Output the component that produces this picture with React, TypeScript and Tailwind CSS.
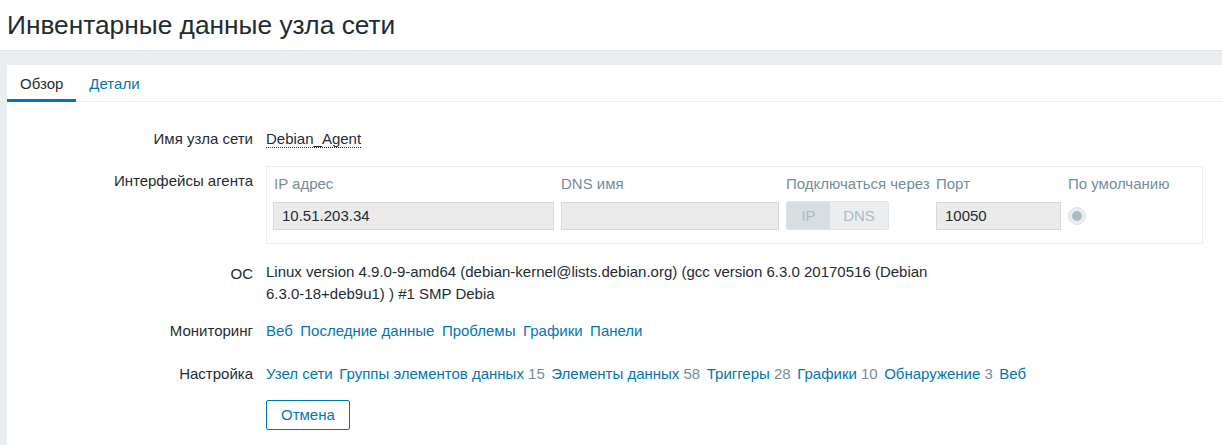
import React from 'react';

const font = { fontFamily: '"Liberation Sans", Arial, sans-serif' };

function Row({ label, children, labelClass = '' }: { label: string; children: React.ReactNode; labelClass?: string }) {
  return (
    <div className="flex">
      <div className={`w-[246px] shrink-0 text-right text-[#1f2c33] ${labelClass}`}>{label}</div>
      <div className="ml-[13px] flex-1">{children}</div>
    </div>
  );
}

function Count({ n }: { n: number }) {
  return <span className="text-[#768d99]"> {n}</span>;
}

export default function App() {
  const monitoring = ['Веб', 'Последние данные', 'Проблемы', 'Графики', 'Панели'];
  const config: [string, number | null][] = [
    ['Узел сети', null],
    ['Группы элементов данных', 15],
    ['Элементы данных', 58],
    ['Триггеры', 28],
    ['Графики', 10],
    ['Обнаружение', 3],
    ['Веб', null],
  ];

  return (
    <div className="w-[1222px] h-[445px] overflow-hidden bg-[#ebeef0] text-[15px] leading-[18px]" style={font}>
      {/* header */}
      <div className="h-[51px] bg-white flex items-center pl-[7px] border-b border-[#e2e6e9]">
        <h1 className="text-[26.3px] leading-[30px] text-[#1f2c33] font-normal -mt-[1px]">Инвентарные данные узла сети</h1>
      </div>

      <div className="pl-[7px] pt-[14px]">
        <div className="bg-white h-[400px]">
          {/* tabs */}
          <div className="flex h-[37px] border-b border-[#ebeef0]">
            <div className="px-[13px] pt-[10px] text-[#1f2c33] border-b-[3px] border-[#0275b8] -mb-[1px]">Обзор</div>
            <div className="px-[13px] pt-[10px] text-[#0275b8]">Детали</div>
          </div>

          <div className="pt-[28px]">
            <Row label="Имя узла сети">
              <span className="text-[#1f2c33] border-b border-dotted border-[#1f2c33]">Debian_Agent</span>
            </Row>

            <div className="mt-[18px]">
              <Row label="Интерфейсы агента" labelClass="pt-[6px]">
                <div className="w-[937px] border border-[#ebeef0] pl-[6px] pt-[8px] pb-[13px]">
                  <div className="grid grid-cols-[288px_225px_150px_132px_auto] text-[#768d99]">
                    <div className="pl-[1px]">IP адрес</div>
                    <div>DNS имя</div>
                    <div>Подключаться через</div>
                    <div>Порт</div>
                    <div>По умолчанию</div>
                  </div>
                  <div className="grid grid-cols-[288px_225px_150px_132px_auto] mt-[8px] items-center">
                    <div className="w-[281px] h-[28px] bg-[#ebebeb] border border-[#d5d9dc] pl-[8px] flex items-center text-[#1f2c33]">10.51.203.34</div>
                    <div className="w-[218px] h-[28px] bg-[#ebebeb] border border-[#d5d9dc]" />
                    <div className="flex w-[103px] h-[29px] border border-[#dfe4e7] rounded-[2px] overflow-hidden text-[#acbbc2]">
                      <div className="w-[43px] bg-[#d6dee2] flex items-center justify-center">IP</div>
                      <div className="flex-1 bg-[#ebeef0] flex items-center justify-center">DNS</div>
                    </div>
                    <div className="w-[125px] h-[28px] bg-[#ebebeb] border border-[#d5d9dc] pl-[8px] flex items-center text-[#1f2c33]">10050</div>
                    <div className="pl-[0px]">
                      <div className="w-[18px] h-[18px] rounded-full bg-[#ebeef0] border border-[#dfe4e7] flex items-center justify-center">
                        <div className="w-[10px] h-[10px] rounded-full bg-[#acbbc2]" />
                      </div>
                    </div>
                  </div>
                </div>
              </Row>
            </div>

            <div className="mt-[17px]">
              <Row label="ОС" labelClass="pt-[4px]">
                <div className="w-[680px] leading-[22px] text-[#1f2c33]">
                  Linux version 4.9.0-9-amd64 (debian-kernel@lists.debian.org) (gcc version 6.3.0 20170516 (Debian 6.3.0-18+deb9u1) ) #1 SMP Debia
                </div>
              </Row>
            </div>

            <div className="mt-[17px]">
              <Row label="Мониторинг">
                <div className="flex gap-[7.5px] text-[#0275b8]">
                  {monitoring.map((m) => (
                    <span key={m}>{m}</span>
                  ))}
                </div>
              </Row>
            </div>

            <div className="mt-[25px]">
              <Row label="Настройка">
                <div className="flex gap-[6.5px] text-[#0275b8]">
                  {config.map(([t, n]) => (
                    <span key={t}>
                      {t}
                      {n !== null && <Count n={n} />}
                    </span>
                  ))}
                </div>
              </Row>
            </div>

            <div className="mt-[17px] pl-[259px]">
              <button className="h-[30px] px-[14px] border border-[#0275b8] rounded-[2px] text-[#0275b8] bg-white">Отмена</button>
            </div>
          </div>
        </div>
      </div>
    </div>
  );
}
